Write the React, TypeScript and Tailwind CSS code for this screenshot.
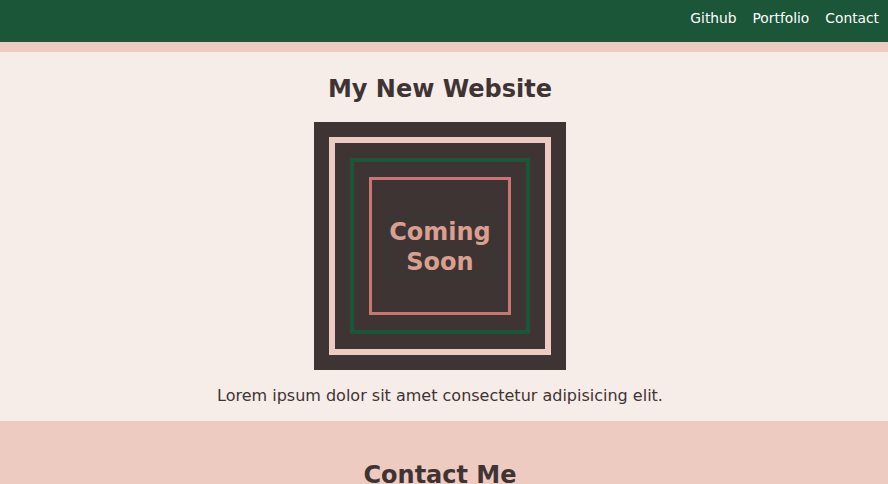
import React from 'react';

function App() {
  const links = ['Github', 'Portfolio', 'Contact'];
  return (
    <div className="min-h-[484px] bg-[#edcbc0] text-[#3e3434]" style={{ fontFamily: '"DejaVu Sans", Verdana, sans-serif' }}>
      {/* nav */}
      <header className="h-[42px] bg-[#1b5639] flex justify-end items-start pt-[8px] pr-[1px]">
        {links.map((l) => (
          <a key={l} href="#" className="px-[8px] text-[13.8px] leading-[20px] text-white">{l}</a>
        ))}
      </header>
      <div className="h-[10px] bg-[#edcbc0]" />

      <section className="bg-[#f6ece8] flex flex-col items-center pt-[21px] pb-[13px] pr-[8px]">
        <h1 className="text-[24px] leading-[32px] font-bold">My New Website</h1>
        <div className="mt-[17px] bg-[#3e3434] p-[15px]">
          <div className="border-[6px] border-[#edcbc0] p-[15px]">
            <div className="border-[4px] border-[#1b5639] p-[15px]">
              <div className="border-[3px] border-[#c97570] px-[15px] pt-[36px] pb-[34px]">
                <div className="border border-[#2f3a33] px-[1px] text-center text-[24px] leading-[30px] font-bold text-[#d9a090]">
                  Coming<br />Soon
                </div>
              </div>
            </div>
          </div>
        </div>
        <p className="mt-[14px] text-[16px] leading-[24px]">Lorem ipsum dolor sit amet consectetur adipisicing elit.</p>
      </section>

      <section className="bg-[#edcbc0] flex flex-col items-center pt-[38px] pb-[40px] pr-[8px]">
        <h2 className="text-[24px] leading-[32px] font-bold">Contact Me</h2>
      </section>
    </div>
  );
}

export default App;
